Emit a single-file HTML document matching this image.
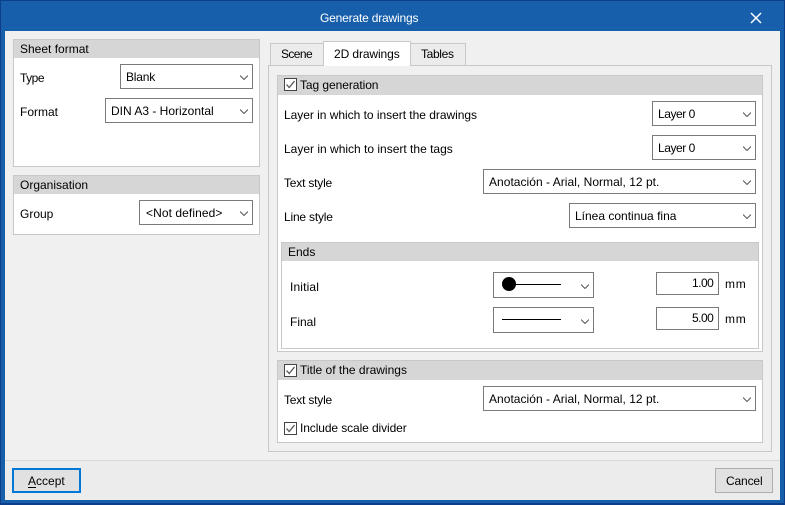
<!DOCTYPE html>
<html>
<head>
<meta charset="utf-8">
<style>
html,body{margin:0;padding:0;width:785px;height:505px;overflow:hidden;background:#175fab;}
body{position:relative;font:12px/16px "Liberation Sans",sans-serif;color:#000;}
div,span{position:absolute;box-sizing:border-box;white-space:nowrap;}
svg{position:absolute;display:block;}
.panel{background:#fff;border:1px solid #c8c8c8;}
.hd{background:#d6d6d6;}
.cb{background:#fff;border:1px solid #7a7a7a;}
.ip{background:#fff;border:1px solid #7a7a7a;}
.btn{background:#e1e1e1;}
</style>
</head>
<body>
<div style="left:0;top:0;width:785px;height:505px;border:1px solid #0c3f8a;border-bottom-width:2px;"></div>
<div style="left:5px;top:31px;width:775px;height:469px;background:#f0f0f0;"></div>
<span style="left:320px;top:10px;color:#fff;letter-spacing:-.18px;">Generate drawings</span>
<svg style="left:750px;top:12px;" width="12" height="12" viewBox="0 0 12 12"><path d="M1 1L11 11M11 1L1 11" stroke="#fff" stroke-width="1.5" fill="none"/></svg>

<!-- Sheet format -->
<div class="panel" style="left:13px;top:39px;width:247px;height:128px;"></div>
<div class="hd" style="left:14px;top:40px;width:245px;height:18px;"></div>
<span style="left:20px;top:41px;">Sheet format</span>
<span style="left:20px;top:70px;letter-spacing:-.5px;">Type</span>
<div class="cb" style="left:120px;top:64px;width:133px;height:25px;"></div>
<span style="left:126px;top:69px;letter-spacing:-.2px;">Blank</span>
<svg style="left:240px;top:75px;" width="8" height="5" viewBox="0 0 8 5"><path d="M0 0.5L4 4.5L8 0.5" stroke="#555" fill="none"/></svg>
<span style="left:20px;top:104px;">Format</span>
<div class="cb" style="left:105px;top:98px;width:148px;height:25px;"></div>
<span style="left:111px;top:103px;">DIN A3 - Horizontal</span>
<svg style="left:240px;top:109px;" width="8" height="5" viewBox="0 0 8 5"><path d="M0 0.5L4 4.5L8 0.5" stroke="#555" fill="none"/></svg>

<!-- Organisation -->
<div class="panel" style="left:13px;top:175px;width:247px;height:60px;"></div>
<div class="hd" style="left:14px;top:176px;width:245px;height:18px;"></div>
<span style="left:20px;top:177px;">Organisation</span>
<span style="left:20px;top:206px;">Group</span>
<div class="cb" style="left:139px;top:200px;width:114px;height:25px;"></div>
<span style="left:146px;top:205px;letter-spacing:.08px;">&lt;Not defined&gt;</span>
<svg style="left:240px;top:211px;" width="8" height="5" viewBox="0 0 8 5"><path d="M0 0.5L4 4.5L8 0.5" stroke="#555" fill="none"/></svg>

<!-- Tabs -->
<div style="left:268px;top:65px;width:504px;height:387px;border:1px solid #c8c8c8;background:#f0f0f0;"></div>
<div style="left:270px;top:43px;width:54px;height:23px;border:1px solid #c8c8c8;background:#ececec;"></div>
<span style="left:281px;top:46px;letter-spacing:-.6px;">Scene</span>
<div style="left:410px;top:43px;width:56px;height:23px;border:1px solid #c8c8c8;background:#ececec;"></div>
<span style="left:421px;top:46px;letter-spacing:-.35px;">Tables</span>
<div style="left:323px;top:41px;width:88px;height:25px;border:1px solid #c8c8c8;border-bottom:0;background:#fff;"></div>
<span style="left:334px;top:46px;letter-spacing:-.1px;">2D drawings</span>

<!-- Tag generation -->
<div class="panel" style="left:277px;top:75px;width:486px;height:277px;"></div>
<div class="hd" style="left:278px;top:76px;width:484px;height:19px;"></div>
<svg style="left:284px;top:78px;" width="13" height="13" viewBox="0 0 13 13"><rect x=".5" y=".5" width="12" height="12" fill="#fff" stroke="#444"/><path d="M2.5 6.5L5.2 9.5L10.5 3" stroke="#555" stroke-width="1.3" fill="none"/></svg>
<span style="left:300px;top:77px;letter-spacing:-.07px;">Tag generation</span>
<span style="left:284px;top:107px;letter-spacing:-.03px;">Layer in which to insert the drawings</span>
<div class="cb" style="left:652px;top:101px;width:104px;height:25px;"></div>
<span style="left:658px;top:106px;letter-spacing:-.45px;">Layer 0</span>
<svg style="left:743px;top:112px;" width="8" height="5" viewBox="0 0 8 5"><path d="M0 0.5L4 4.5L8 0.5" stroke="#555" fill="none"/></svg>
<span style="left:284px;top:141px;">Layer in which to insert the tags</span>
<div class="cb" style="left:652px;top:135px;width:104px;height:25px;"></div>
<span style="left:658px;top:140px;letter-spacing:-.45px;">Layer 0</span>
<svg style="left:743px;top:146px;" width="8" height="5" viewBox="0 0 8 5"><path d="M0 0.5L4 4.5L8 0.5" stroke="#555" fill="none"/></svg>
<span style="left:284px;top:175px;letter-spacing:-.2px;">Text style</span>
<div class="cb" style="left:483px;top:169px;width:273px;height:25px;"></div>
<span style="left:489px;top:174px;letter-spacing:.03px;">Anotación - Arial, Normal, 12 pt.</span>
<svg style="left:743px;top:180px;" width="8" height="5" viewBox="0 0 8 5"><path d="M0 0.5L4 4.5L8 0.5" stroke="#555" fill="none"/></svg>
<span style="left:284px;top:209px;letter-spacing:-.2px;">Line style</span>
<div class="cb" style="left:569px;top:203px;width:187px;height:25px;"></div>
<span style="left:575px;top:208px;">Línea continua fina</span>
<svg style="left:743px;top:214px;" width="8" height="5" viewBox="0 0 8 5"><path d="M0 0.5L4 4.5L8 0.5" stroke="#555" fill="none"/></svg>

<!-- Ends -->
<div class="panel" style="left:281px;top:242px;width:478px;height:107px;"></div>
<div class="hd" style="left:282px;top:243px;width:476px;height:18px;"></div>
<span style="left:288px;top:244px;">Ends</span>
<span style="left:290px;top:279px;letter-spacing:.15px;">Initial</span>
<div class="cb" style="left:493px;top:272px;width:101px;height:26px;"></div>
<svg style="left:500px;top:276px;" width="64" height="16" viewBox="0 0 64 16"><circle cx="9" cy="8" r="7" fill="#000"/><path d="M15 8.5H61" stroke="#000"/></svg>
<svg style="left:581px;top:284px;" width="8" height="5" viewBox="0 0 8 5"><path d="M0 0.5L4 4.5L8 0.5" stroke="#555" fill="none"/></svg>
<div class="ip" style="left:656px;top:272px;width:63px;height:23px;"></div>
<span style="left:692px;top:275px;letter-spacing:-.5px;">1.00</span>
<span style="left:725px;top:276px;letter-spacing:.8px;">mm</span>
<span style="left:290px;top:314px;">Final</span>
<div class="cb" style="left:493px;top:307px;width:101px;height:26px;"></div>
<svg style="left:502px;top:318px;" width="60" height="2" viewBox="0 0 60 2"><path d="M0 1.5H59" stroke="#000"/></svg>
<svg style="left:581px;top:319px;" width="8" height="5" viewBox="0 0 8 5"><path d="M0 0.5L4 4.5L8 0.5" stroke="#555" fill="none"/></svg>
<div class="ip" style="left:656px;top:307px;width:63px;height:23px;"></div>
<span style="left:692px;top:310px;letter-spacing:-.5px;">5.00</span>
<span style="left:725px;top:311px;letter-spacing:.8px;">mm</span>

<!-- Title -->
<div class="panel" style="left:277px;top:360px;width:486px;height:83px;"></div>
<div class="hd" style="left:278px;top:361px;width:484px;height:19px;"></div>
<svg style="left:284px;top:364px;" width="13" height="13" viewBox="0 0 13 13"><rect x=".5" y=".5" width="12" height="12" fill="#fff" stroke="#444"/><path d="M2.5 6.5L5.2 9.5L10.5 3" stroke="#555" stroke-width="1.3" fill="none"/></svg>
<span style="left:300px;top:362px;">Title of the drawings</span>
<span style="left:284px;top:392px;letter-spacing:-.2px;">Text style</span>
<div class="cb" style="left:483px;top:386px;width:273px;height:25px;"></div>
<span style="left:489px;top:391px;letter-spacing:.03px;">Anotación - Arial, Normal, 12 pt.</span>
<svg style="left:743px;top:397px;" width="8" height="5" viewBox="0 0 8 5"><path d="M0 0.5L4 4.5L8 0.5" stroke="#555" fill="none"/></svg>
<svg style="left:284px;top:422px;" width="13" height="13" viewBox="0 0 13 13"><rect x=".5" y=".5" width="12" height="12" fill="#fff" stroke="#444"/><path d="M2.5 6.5L5.2 9.5L10.5 3" stroke="#555" stroke-width="1.3" fill="none"/></svg>
<span style="left:300px;top:420px;letter-spacing:-.1px;">Include scale divider</span>

<!-- Footer -->
<div style="left:5px;top:460px;width:775px;height:40px;background:#ececec;border-top:1px solid #d8d8d8;"></div>
<div class="btn" style="left:12px;top:468px;width:69px;height:25px;border:2px solid #0078d7;"></div>
<span style="left:28px;top:473px;"><u style="text-underline-offset:2px;">A</u>ccept</span>
<div class="btn" style="left:715px;top:468px;width:58px;height:25px;border:1px solid #adadad;"></div>
<span style="left:726px;top:473px;letter-spacing:-.15px;">Cancel</span>
</body>
</html>
